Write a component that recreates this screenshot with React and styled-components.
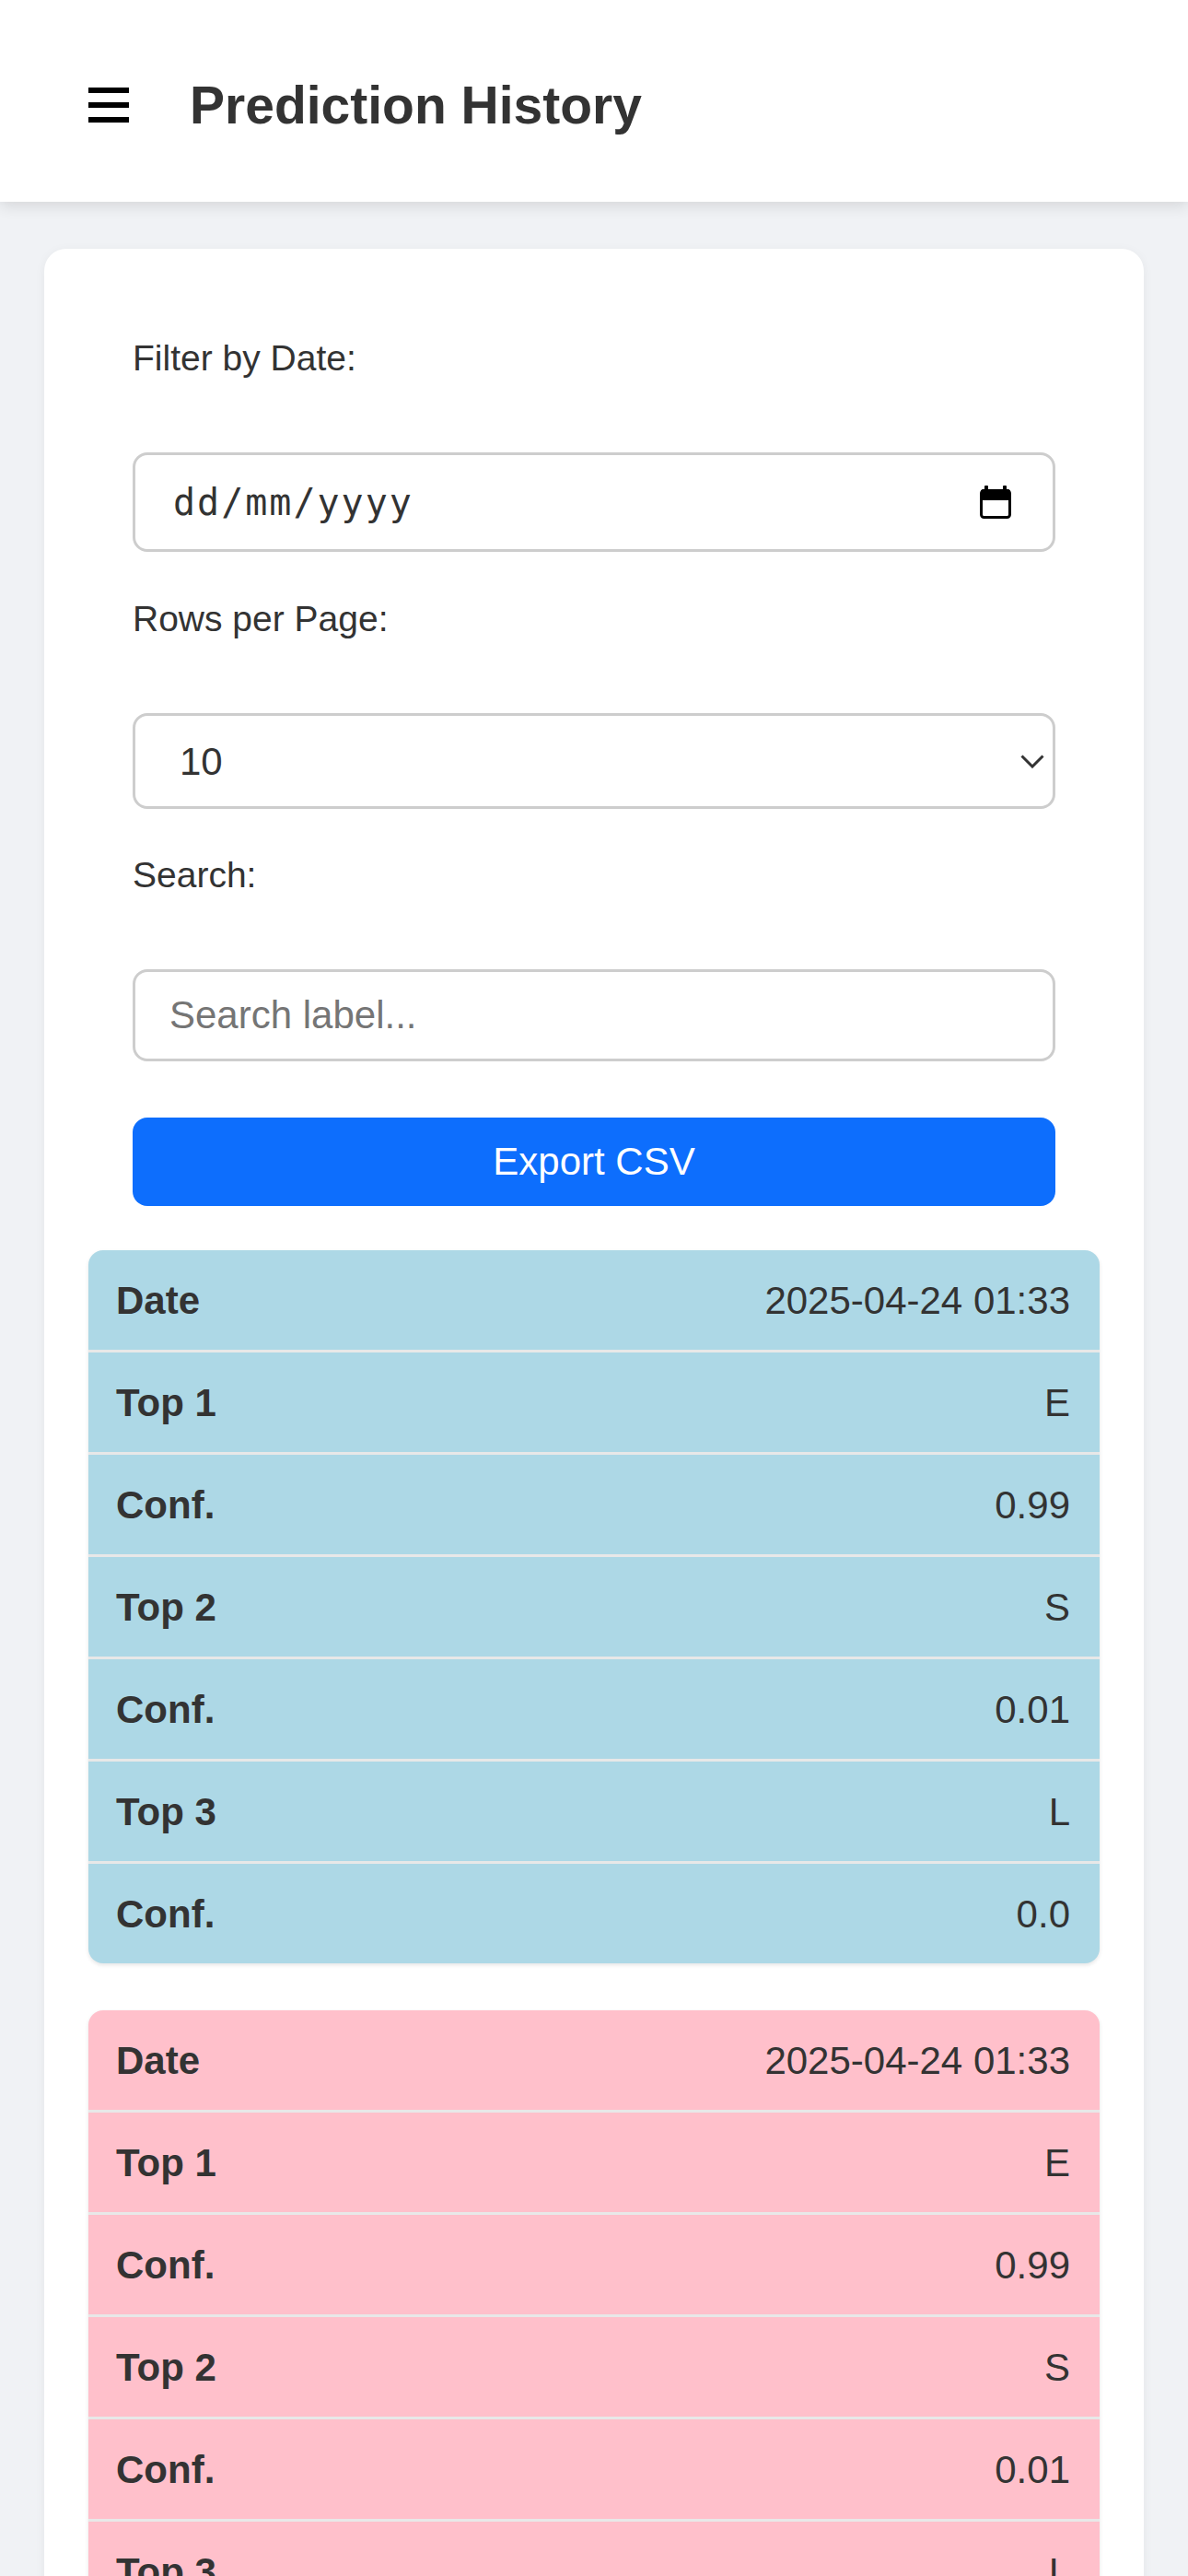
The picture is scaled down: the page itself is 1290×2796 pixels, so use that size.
import React from "react";
import styled, { createGlobalStyle } from "styled-components";

const GlobalStyle = createGlobalStyle`
  html, body {
    margin: 0;
    padding: 0;
    background: #f0f2f5;
    font-family: "Liberation Sans", Arial, Helvetica, sans-serif;
    color: #333;
  }
  * { box-sizing: border-box; }
`;

const Screen = styled.div`
  height: 100vh;
  overflow: hidden;
`;

const Header = styled.header`
  position: relative;
  z-index: 1;
  height: 219px;
  background: #fff;
  display: flex;
  align-items: center;
  gap: 66px;
  padding: 9px 96px 0;
  box-shadow: 0 4px 16px rgba(0, 0, 0, 0.12);
`;

const MenuButton = styled.button`
  display: flex;
  padding: 0;
  border: none;
  background: none;
  color: #000;
`;

const Title = styled.h1`
  margin: 0;
  font-size: 57px;
  font-weight: 700;
  color: #333;
`;

const Main = styled.main`
  padding: 51px 48px;
`;

const Card = styled.section`
  background: #fff;
  border-radius: 24px;
  padding: 48px;
  box-shadow: 0 2px 12px rgba(0, 0, 0, 0.05);
`;

const Controls = styled.div`
  padding: 48px;
`;

const Label = styled.label`
  display: block;
  font-size: 39px;
  line-height: 45px;
  color: #333;
  margin-bottom: 80px;
`;

const FieldBox = styled.div`
  display: flex;
  align-items: center;
  height: ${(p) => p.$h}px;
  border: 3px solid #cdcdcd;
  border-radius: 16px;
  background: #fff;
  padding: ${(p) => p.$pad};
  margin-bottom: ${(p) => p.$mb}px;
`;

const DateText = styled.input`
  flex: 1;
  min-width: 0;
  border: none;
  outline: none;
  background: transparent;
  padding: 0;
  font-family: "DejaVu Sans Mono", "Liberation Mono", monospace;
  font-size: 40px;
  letter-spacing: 2px;
  color: #333;
  &::placeholder { color: #333; opacity: 1; }
`;

const Select = styled.select`
  flex: 1;
  appearance: none;
  -webkit-appearance: none;
  border: none;
  outline: none;
  background: transparent;
  padding: 0;
  font-family: "Liberation Sans", Arial, sans-serif;
  font-size: 42px;
  color: #333;
`;

const SearchInput = styled.input`
  display: block;
  width: 100%;
  height: 100px;
  border: 3px solid #cdcdcd;
  border-radius: 16px;
  padding: 0 37px;
  margin-bottom: 61px;
  font-family: "Liberation Sans", Arial, sans-serif;
  font-size: 42px;
  color: #333;
  outline: none;
  &::placeholder { color: #757575; opacity: 1; }
`;

const ExportButton = styled.button`
  display: block;
  width: 100%;
  height: 96px;
  border: none;
  border-radius: 16px;
  background: #0d6efd;
  color: #fff;
  font-family: "Liberation Sans", Arial, sans-serif;
  font-size: 42px;
`;

const PredTable = styled.div`
  background: ${(p) => p.$bg};
  border-radius: 16px;
  overflow: hidden;
  box-shadow: 0 2px 4px rgba(0, 0, 0, 0.1);
  margin-bottom: 51px;
`;

const Row = styled.div`
  display: flex;
  justify-content: space-between;
  height: 111px;
  padding: 31px 32px 29px 30px;
  font-size: 42px;
  line-height: 48px;
  color: #333;
  border-bottom: 3px solid #e8e8e8;
  &:last-child {
    height: 108px;
    border-bottom: none;
  }
`;

const Key = styled.span`
  font-weight: 700;
`;

const Value = styled.span`
  font-weight: 400;
`;

const Hamburger = () => (
  <svg width="44" height="38" viewBox="0 0 44 38" fill="currentColor">
    <rect x="0" y="0" width="44" height="6" />
    <rect x="0" y="16" width="44" height="6" />
    <rect x="0" y="32" width="44" height="6" />
  </svg>
);

const CalendarIcon = () => (
  <svg width="34" height="36" viewBox="0 0 34 36">
    <rect x="5" y="0" width="4" height="6" rx="1" fill="#000" />
    <rect x="25" y="0" width="4" height="6" rx="1" fill="#000" />
    <rect x="1.5" y="5.5" width="31" height="29" rx="3" fill="none" stroke="#000" strokeWidth="3" />
    <rect x="1" y="4" width="32" height="12" rx="3" fill="#000" />
  </svg>
);

const Chevron = () => (
  <svg width="26" height="15" viewBox="0 0 26 15">
    <polyline points="1.5,1.5 13,13 24.5,1.5" fill="none" stroke="#333" strokeWidth="3" />
  </svg>
);

const predictions = [
  {
    bg: "#add8e6",
    rows: [
      ["Date", "2025-04-24 01:33"],
      ["Top 1", "E"],
      ["Conf.", "0.99"],
      ["Top 2", "S"],
      ["Conf.", "0.01"],
      ["Top 3", "L"],
      ["Conf.", "0.0"],
    ],
  },
  {
    bg: "#ffc0cb",
    rows: [
      ["Date", "2025-04-24 01:33"],
      ["Top 1", "E"],
      ["Conf.", "0.99"],
      ["Top 2", "S"],
      ["Conf.", "0.01"],
      ["Top 3", "L"],
      ["Conf.", "0.0"],
    ],
  },
];

export default function App() {
  return (
    <Screen>
      <GlobalStyle />
      <Header>
        <MenuButton aria-label="Menu">
          <Hamburger />
        </MenuButton>
        <Title>Prediction History</Title>
      </Header>
      <Main>
        <Card>
          <Controls>
            <Label>Filter by Date:</Label>
            <FieldBox $h={108} $pad="0 45px 0 41px" $mb={50}>
              <DateText type="text" placeholder="dd/mm/yyyy" />
              <CalendarIcon />
            </FieldBox>
            <Label>Rows per Page:</Label>
            <FieldBox $h={104} $pad="0 9px 0 48px" $mb={49}>
              <Select defaultValue="10">
                <option value="5">5</option>
                <option value="10">10</option>
                <option value="20">20</option>
                <option value="50">50</option>
              </Select>
              <Chevron />
            </FieldBox>
            <Label>Search:</Label>
            <SearchInput type="text" placeholder="Search label..." />
            <ExportButton>Export CSV</ExportButton>
          </Controls>
          {predictions.map((p, i) => (
            <PredTable key={i} $bg={p.bg}>
              {p.rows.map(([k, v], j) => (
                <Row key={j}>
                  <Key>{k}</Key>
                  <Value>{v}</Value>
                </Row>
              ))}
            </PredTable>
          ))}
        </Card>
      </Main>
    </Screen>
  );
}
